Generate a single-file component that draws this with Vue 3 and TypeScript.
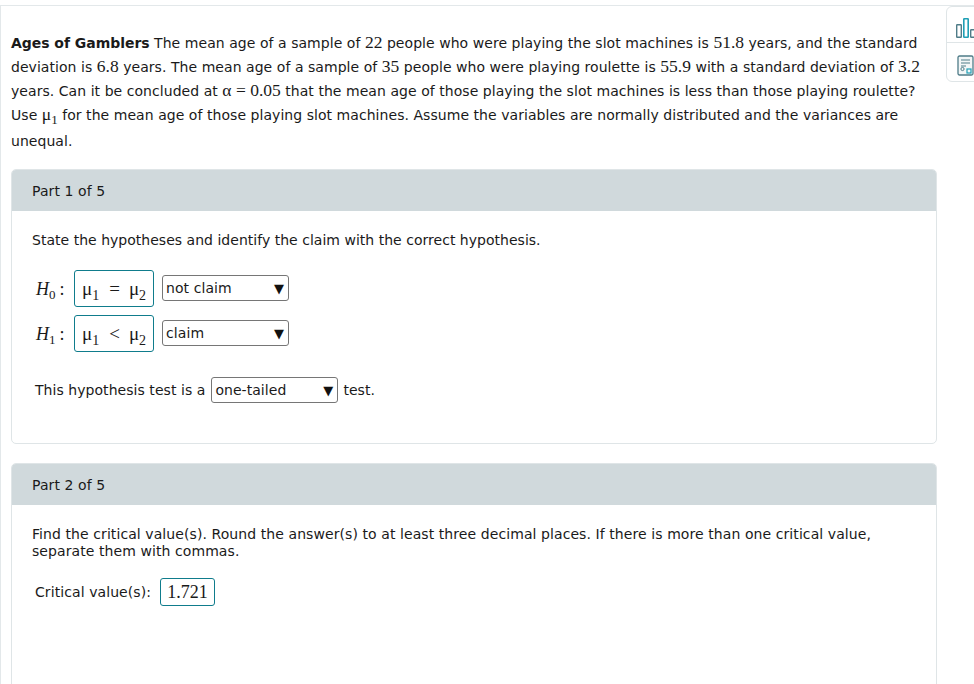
<script setup lang="ts">
const parts: string[] = []
void parts
</script>

<template>
  <div class="page">
    <aside class="tools">
      <button class="tool tool-top" type="button" aria-label="Data">
        <svg width="27" height="22" viewBox="0 0 27 22">
          <rect x="1.7" y="6.7" width="4.6" height="12.6" rx="0.5" fill="none" stroke="#4f7c88" stroke-width="1.4" />
          <rect x="8.8" y="0.8" width="4.4" height="18.5" rx="0.5" fill="none" stroke="#1f9fb5" stroke-width="1.6" />
          <rect x="15.7" y="11.7" width="4.6" height="7.6" rx="0.5" fill="none" stroke="#4f7c88" stroke-width="1.4" />
        </svg>
      </button>
      <button class="tool" type="button" aria-label="Formulas">
        <svg width="18" height="22" viewBox="0 0 18 22">
          <rect x="1" y="1" width="15" height="19" rx="1.5" fill="#f2f6f7" stroke="#4f7c88" stroke-width="1.3" />
          <path d="M4 5h9M4 8h9M4 11h5" stroke="#4f7c88" stroke-width="1" fill="none" />
          <circle cx="5.5" cy="14" r="1.6" fill="none" stroke="#4f7c88" stroke-width="1" />
          <rect x="10" y="14" width="4" height="4" fill="none" stroke="#1f9fb5" stroke-width="1.2" />
        </svg>
      </button>
    </aside>

    <div class="problem">
      <p class="problem-text">
        <b>Ages of Gamblers</b> The mean age of a sample of <span class="m">22</span> people who were playing the slot machines is <span class="m">51.8</span> years, and the standard deviation is <span class="m">6.8</span> years. The mean age of a sample of <span class="m">35</span> people who were playing roulette is <span class="m">55.9</span> with a standard deviation of <span class="m">3.2</span> years. Can it be concluded at <span class="m">α = 0.05</span> that the mean age of those playing the slot machines is less than those playing roulette? Use <span class="m">μ<sub>1</sub></span> for the mean age of those playing slot machines. Assume the variables are normally distributed and the variances are
      </p>
      <p class="problem-end">unequal.</p>
    </div>

    <section class="card card-one">
      <header class="card-head">Part 1 of 5</header>
      <div class="card-body">
        <p class="lead lead-tight">State the hypotheses and identify the claim with the correct hypothesis.</p>

        <div class="hyp">
          <span class="hyp-label m"><i>H</i><sub>0</sub><span class="colon">:</span></span>
          <span class="answer m"><span>μ<sub>1</sub></span><span class="op">=</span><span>μ<sub>2</sub></span></span>
          <span class="select wide"><span>not claim</span><span class="arrow">▼</span></span>
        </div>
        <div class="hyp">
          <span class="hyp-label m"><i>H</i><sub>1</sub><span class="colon">:</span></span>
          <span class="answer m"><span>μ<sub>1</sub></span><span class="op">&lt;</span><span>μ<sub>2</sub></span></span>
          <span class="select wide"><span>claim</span><span class="arrow">▼</span></span>
        </div>

        <div class="test-line">
          <span>This hypothesis test is a</span>
          <span class="select wide"><span>one-tailed</span><span class="arrow">▼</span></span>
          <span>test.</span>
        </div>
      </div>
    </section>

    <section class="card card-two">
      <header class="card-head">Part 2 of 5</header>
      <div class="card-body">
        <p class="lead">Find the critical value(s). Round the answer(s) to at least three decimal places. If there is more than one critical value, separate them with commas.</p>
        <div class="critical">
          <span>Critical value(s):</span>
          <span class="answer value m">1.721</span>
        </div>
      </div>
    </section>
  </div>
</template>

<style scoped>
.page {
  position: relative;
  box-sizing: border-box;
  width: 974px;
  height: 679px;
  margin-top: 5px;
  padding: 25px 37px 0 11px;
  border-top: 1px solid #e3e8ea;
  border-left: 1px solid #e3e8ea;
  overflow: hidden;
  font-family: "DejaVu Sans", Verdana, sans-serif;
  font-size: 14px;
  letter-spacing: 0.08px;
  color: #1a1a1a;
  background: #fff;
}
.problem {
  width: 916px;
  margin: 0 0 16px -1px;
  letter-spacing: 0.05px;
}
.problem p {
  margin: 0;
  line-height: 24px;
}
.problem-end {
  padding-top: 2px;
}
b {
  letter-spacing: -0.04px;
}
.m {
  font-family: "Liberation Serif", "Times New Roman", serif;
  font-size: 17.5px;
  line-height: 1;
  letter-spacing: 0;
}
sub {
  font-size: 13px;
  line-height: 0;
  vertical-align: -4px;
}
.tools {
  position: absolute;
  top: 0;
  left: 945px;
  width: 40px;
  height: 76px;
  border: 1px solid #dfe5e7;
  border-radius: 6px;
  background: #fff;
  box-sizing: border-box;
}
.tool {
  display: block;
  width: 100%;
  height: 37px;
  padding: 8px 0 0 8px;
  border: 0;
  background: none;
  text-align: left;
}
.tool svg {
  display: block;
}
.tool-top {
  height: 36px;
  border-bottom: 1px solid #dfe5e7;
}
.tool:last-child svg {
  margin-left: 2px;
  margin-top: 1px;
}
.card {
  width: 926px;
  margin-left: -1px;
  border: 1px solid #dfe5e7;
  border-radius: 5px;
  box-sizing: border-box;
  overflow: hidden;
}
.card-one {
  height: 275px;
  margin-bottom: 19px;
}
.card-two {
  height: 300px;
}
.card-head {
  height: 41px;
  box-sizing: border-box;
  padding-left: 20px;
  line-height: 42px;
  background: #d0d9dc;
}
.card-body {
  padding: 21px 20px 0;
}
.lead {
  margin: 0;
  line-height: 17px;
}
.lead-tight {
  letter-spacing: 0.02px;
}
.hyp {
  display: flex;
  align-items: center;
  margin-top: 8px;
  padding-left: 4px;
}
.lead + .hyp {
  margin-top: 21px;
}
.hyp-label {
  width: 38px;
  white-space: nowrap;
  font-size: 18px;
}
.colon {
  margin-left: 4px;
}
.answer {
  display: inline-flex;
  align-items: center;
  box-sizing: border-box;
  height: 37px;
  width: 80px;
  padding: 0 7px;
  border: 1px solid #0f7c8c;
  border-radius: 3px;
  background: #fff;
  font-size: 19px;
}
.answer sub {
  font-size: 14px;
  vertical-align: -5px;
}
.op {
  margin: 0 9px 0 10px;
}
.select {
  display: inline-flex;
  align-items: center;
  justify-content: space-between;
  box-sizing: border-box;
  height: 26px;
  padding: 0 4px 2px 3px;
  border: 1px solid #767676;
  border-radius: 3px;
  background: #fff;
}
.wide {
  width: 127px;
}
.hyp .select {
  margin-left: 8px;
  margin-bottom: 1px;
  padding-bottom: 0;
}
.arrow {
  font-size: 13px;
  color: #111;
}
.test-line {
  display: flex;
  align-items: center;
  gap: 6px;
  margin-top: 24px;
  padding-left: 3px;
  letter-spacing: 0.05px;
}
.test-line .select {
  margin-top: 1px;
  margin-right: -1px;
  padding-bottom: 0;
}
.critical {
  display: flex;
  align-items: center;
  gap: 9px;
  margin-top: 18px;
  padding-left: 3px;
}
.value {
  width: 55px;
  height: 28px;
  justify-content: center;
  padding: 0;
  font-size: 18px;
}
</style>
